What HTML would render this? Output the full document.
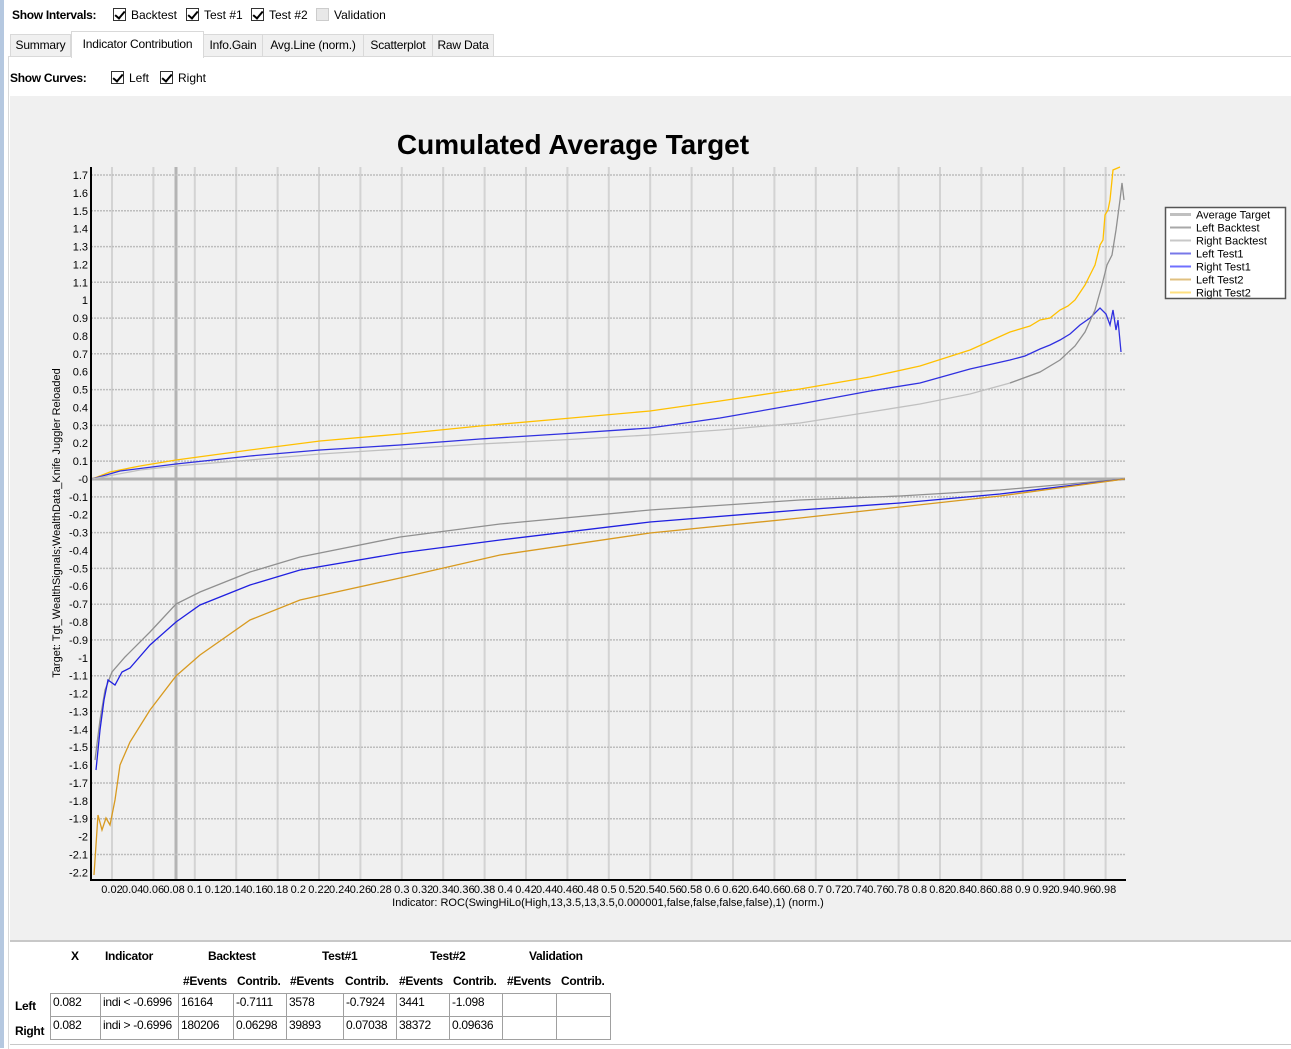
<!DOCTYPE html>
<html><head><meta charset="utf-8"><style>
body{margin:0;width:1291px;height:1048px;background:#fff;font-family:"Liberation Sans",sans-serif;font-size:12px;position:relative;overflow:hidden;color:#000}
.a{position:absolute}
.cb{position:absolute;width:13px;height:13px;border:1px solid #333;background:#fff;box-sizing:border-box}
.cb.on::after{content:"";position:absolute;left:3px;top:0px;width:4px;height:8px;border:solid #000;border-width:0 2px 2px 0;transform:rotate(40deg)}
.tab{position:absolute;top:34px;height:23px;background:#f0f0f0;border:1px solid #d9d9d9;box-sizing:border-box;line-height:21px;text-align:center;font-size:12px;letter-spacing:-0.2px}
table{border-collapse:collapse;position:absolute;left:50px;top:993px;font-size:12px;table-layout:fixed;letter-spacing:-0.3px}
td{border:1px solid #a0a0a0;height:23px;padding:0 2px;vertical-align:top;line-height:16px;white-space:nowrap;overflow:hidden;box-sizing:border-box}
.b{font-weight:bold;letter-spacing:-0.3px}
</style></head><body>
<div class="a" style="left:0;top:0;width:4px;height:1048px;background:#b5c8e0"></div>
<div class="a b" style="left:12px;top:8px">Show Intervals:</div>
<div class="cb on" style="left:113px;top:8px"></div><div class="a" style="left:131px;top:8px">Backtest</div>
<div class="cb on" style="left:186px;top:8px"></div><div class="a" style="left:204px;top:8px">Test #1</div>
<div class="cb on" style="left:251px;top:8px"></div><div class="a" style="left:269px;top:8px">Test #2</div>
<div class="cb" style="left:316px;top:8px;background:#e8e8e8;border-color:#ccc"></div><div class="a" style="left:334px;top:8px">Validation</div>

<div class="a" style="left:8px;top:56px;width:1283px;height:992px;border-left:1px solid #d9d9d9;border-top:1px solid #d9d9d9"></div>
<div class="tab" style="left:10px;width:61px">Summary</div>
<div class="tab" style="left:71px;top:31px;height:27px;width:133px;background:#fff;border-bottom:none;line-height:25px">Indicator Contribution</div>
<div class="tab" style="left:203px;width:60px">Info.Gain</div>
<div class="tab" style="left:262px;width:102px">Avg.Line (norm.)</div>
<div class="tab" style="left:363px;width:70px">Scatterplot</div>
<div class="tab" style="left:432px;width:62px">Raw Data</div>

<div class="a b" style="left:10px;top:71px">Show Curves:</div>
<div class="cb on" style="left:111px;top:71px"></div><div class="a" style="left:129px;top:71px">Left</div>
<div class="cb on" style="left:160px;top:71px"></div><div class="a" style="left:178px;top:71px">Right</div>

<div class="a" style="left:10px;top:96px;width:1281px;height:844px;background:#f0f0f0"></div>
<div class="a" style="left:10px;top:940px;width:1281px;height:2px;background:#c8c8c8"></div>
<div class="a" style="left:10px;top:1044px;width:1281px;height:1px;background:#c8c8c8"></div>

<svg class="a" style="left:0;top:0" width="1291" height="940" font-family="Liberation Sans, sans-serif">
<text x="573" y="154" font-size="28" font-weight="bold" text-anchor="middle">Cumulated Average Target</text>
<g stroke="#d3d3d3" stroke-width="2">
<line x1="112" y1="167" x2="112" y2="880"/><line x1="153.4" y1="167" x2="153.4" y2="880"/><line x1="194.8" y1="167" x2="194.8" y2="880"/><line x1="236.2" y1="167" x2="236.2" y2="880"/><line x1="277.6" y1="167" x2="277.6" y2="880"/><line x1="319" y1="167" x2="319" y2="880"/><line x1="360.4" y1="167" x2="360.4" y2="880"/><line x1="401.8" y1="167" x2="401.8" y2="880"/><line x1="443.2" y1="167" x2="443.2" y2="880"/><line x1="484.6" y1="167" x2="484.6" y2="880"/><line x1="526" y1="167" x2="526" y2="880"/><line x1="567.4" y1="167" x2="567.4" y2="880"/><line x1="608.8" y1="167" x2="608.8" y2="880"/><line x1="650.2" y1="167" x2="650.2" y2="880"/><line x1="691.6" y1="167" x2="691.6" y2="880"/><line x1="733" y1="167" x2="733" y2="880"/><line x1="774.4" y1="167" x2="774.4" y2="880"/><line x1="815.8" y1="167" x2="815.8" y2="880"/><line x1="857.2" y1="167" x2="857.2" y2="880"/><line x1="898.6" y1="167" x2="898.6" y2="880"/><line x1="940" y1="167" x2="940" y2="880"/><line x1="981.4" y1="167" x2="981.4" y2="880"/><line x1="1022.8" y1="167" x2="1022.8" y2="880"/><line x1="1064.2" y1="167" x2="1064.2" y2="880"/><line x1="1105.6" y1="167" x2="1105.6" y2="880"/>
</g>
<line x1="176" y1="167" x2="176" y2="880" stroke="#b4b4b4" stroke-width="3"/>
<g stroke="#bdbdbd" stroke-width="1.5" stroke-dasharray="2,1">
<line x1="91" y1="175" x2="1125" y2="175"/><line x1="91" y1="210.8" x2="1125" y2="210.8"/><line x1="91" y1="246.6" x2="1125" y2="246.6"/><line x1="91" y1="282.3" x2="1125" y2="282.3"/><line x1="91" y1="318.1" x2="1125" y2="318.1"/><line x1="91" y1="353.8" x2="1125" y2="353.8"/><line x1="91" y1="389.6" x2="1125" y2="389.6"/><line x1="91" y1="425.4" x2="1125" y2="425.4"/><line x1="91" y1="461.1" x2="1125" y2="461.1"/><line x1="91" y1="496.9" x2="1125" y2="496.9"/><line x1="91" y1="532.6" x2="1125" y2="532.6"/><line x1="91" y1="568.4" x2="1125" y2="568.4"/><line x1="91" y1="604.2" x2="1125" y2="604.2"/><line x1="91" y1="639.9" x2="1125" y2="639.9"/><line x1="91" y1="675.7" x2="1125" y2="675.7"/><line x1="91" y1="711.4" x2="1125" y2="711.4"/><line x1="91" y1="747.2" x2="1125" y2="747.2"/><line x1="91" y1="783" x2="1125" y2="783"/><line x1="91" y1="818.7" x2="1125" y2="818.7"/><line x1="91" y1="854.5" x2="1125" y2="854.5"/>
</g>
<line x1="91" y1="479" x2="1125" y2="479" stroke="#b0b0b0" stroke-width="3"/>
<g fill="none" stroke-width="1.3">
<polyline stroke="#ffc000" points="92,479 110,472 140,466 176,460 250,450 320,441 400,434 480,426 560,419 650,411 720,401 800,389 870,377 920,366 970,350 1010,332 1030,326 1040,320 1050,318 1060,310 1068,306 1075,300 1085,285 1090,275 1095,265 1100,245 1103,240 1105,215 1108,210 1110,200 1113,170 1120,167"/>
<polyline stroke="#3030e0" points="92,479 120,471 176,464 250,456 320,450 400,445 480,439 560,434 650,428 720,418 800,404 870,391 920,383 970,369 1010,360 1025,356 1040,349 1050,345 1060,340 1070,334 1080,325 1090,318 1095,313 1100,308 1106,314 1110,325 1113,310 1116,330 1118,320 1121,352"/>
<polyline stroke="#c0c0c0" points="92,479 140,470 176,466 250,460 320,454 400,449 480,444 560,440 650,435 720,430 800,423 870,412 920,404 970,394 1010,383 1040,372"/>
<polyline stroke="#909090" points="1010,383 1040,372 1060,360 1075,346 1085,332 1095,310 1102,285 1107,265 1112,255 1116,230 1120,200 1122,183 1124,200"/>
<polyline stroke="#909090" points="95,760 100,720 105,690 112,672 125,657 150,632 176,604 200,592 250,572 300,557 400,537 500,524 650,510 800,500 900,496 1000,490 1125,479"/>
<polyline stroke="#2020e0" points="96,770 100,730 104,700 108,680 115,685 122,672 130,668 150,645 176,622 200,605 250,585 300,570 400,553 500,540 650,522 800,510 900,503 1000,494 1125,479"/>
<polyline stroke="#d89a20" points="94,875 96,845 98,815 102,830 106,818 110,825 115,800 120,765 130,742 150,710 176,676 200,655 250,620 300,600 400,578 500,555 650,533 800,518 900,507 1000,496 1125,479"/>
</g>
<line x1="91" y1="167" x2="91" y2="881" stroke="#000" stroke-width="2"/>
<line x1="90" y1="880" x2="1126" y2="880" stroke="#000" stroke-width="2"/>
<g font-size="11" text-anchor="end" fill="#000">
<text x="88" y="179">1.7</text><text x="88" y="196.9">1.6</text><text x="88" y="214.8">1.5</text><text x="88" y="232.6">1.4</text><text x="88" y="250.5">1.3</text><text x="88" y="268.4">1.2</text><text x="88" y="286.3">1.1</text><text x="88" y="304.2">1</text><text x="88" y="322">0.9</text><text x="88" y="339.9">0.8</text><text x="88" y="357.8">0.7</text><text x="88" y="375.7">0.6</text><text x="88" y="393.6">0.5</text><text x="88" y="411.4">0.4</text><text x="88" y="429.3">0.3</text><text x="88" y="447.2">0.2</text><text x="88" y="465.1">0.1</text><text x="88" y="483">-0</text><text x="88" y="500.8">-0.1</text><text x="88" y="518.7">-0.2</text><text x="88" y="536.6">-0.3</text><text x="88" y="554.5">-0.4</text><text x="88" y="572.4">-0.5</text><text x="88" y="590.2">-0.6</text><text x="88" y="608.1">-0.7</text><text x="88" y="626">-0.8</text><text x="88" y="643.9">-0.9</text><text x="88" y="661.8">-1</text><text x="88" y="679.6">-1.1</text><text x="88" y="697.5">-1.2</text><text x="88" y="715.4">-1.3</text><text x="88" y="733.3">-1.4</text><text x="88" y="751.2">-1.5</text><text x="88" y="769">-1.6</text><text x="88" y="786.9">-1.7</text><text x="88" y="804.8">-1.8</text><text x="88" y="822.7">-1.9</text><text x="88" y="840.6">-2</text><text x="88" y="858.4">-2.1</text><text x="88" y="876.3">-2.2</text>
</g>
<g font-size="11" text-anchor="middle">
<text x="112" y="893">0.02</text><text x="132.7" y="893">0.04</text><text x="153.4" y="893">0.06</text><text x="174.1" y="893">0.08</text><text x="194.8" y="893">0.1</text><text x="215.5" y="893">0.12</text><text x="236.2" y="893">0.14</text><text x="256.9" y="893">0.16</text><text x="277.6" y="893">0.18</text><text x="298.3" y="893">0.2</text><text x="319" y="893">0.22</text><text x="339.7" y="893">0.24</text><text x="360.4" y="893">0.26</text><text x="381.1" y="893">0.28</text><text x="401.8" y="893">0.3</text><text x="422.5" y="893">0.32</text><text x="443.2" y="893">0.34</text><text x="463.9" y="893">0.36</text><text x="484.6" y="893">0.38</text><text x="505.3" y="893">0.4</text><text x="526" y="893">0.42</text><text x="546.7" y="893">0.44</text><text x="567.4" y="893">0.46</text><text x="588.1" y="893">0.48</text><text x="608.8" y="893">0.5</text><text x="629.5" y="893">0.52</text><text x="650.2" y="893">0.54</text><text x="670.9" y="893">0.56</text><text x="691.6" y="893">0.58</text><text x="712.3" y="893">0.6</text><text x="733" y="893">0.62</text><text x="753.7" y="893">0.64</text><text x="774.4" y="893">0.66</text><text x="795.1" y="893">0.68</text><text x="815.8" y="893">0.7</text><text x="836.5" y="893">0.72</text><text x="857.2" y="893">0.74</text><text x="877.9" y="893">0.76</text><text x="898.6" y="893">0.78</text><text x="919.3" y="893">0.8</text><text x="940" y="893">0.82</text><text x="960.7" y="893">0.84</text><text x="981.4" y="893">0.86</text><text x="1002.1" y="893">0.88</text><text x="1022.8" y="893">0.9</text><text x="1043.5" y="893">0.92</text><text x="1064.2" y="893">0.94</text><text x="1084.9" y="893">0.96</text><text x="1105.6" y="893">0.98</text>
<text x="608" y="906">Indicator: ROC(SwingHiLo(High,13,3.5,13,3.5,0.000001,false,false,false,false),1) (norm.)</text>
</g>
<text transform="translate(60,523) rotate(-90)" font-size="11" text-anchor="middle">Target: Tgt_WealthSignals;WealthData_Knife Juggler Reloaded</text>
<rect x="1165.5" y="207.5" width="120" height="91" fill="#fff" stroke="#555" stroke-width="1.5"/>
<g stroke-width="2">
<line x1="1170" y1="214.5" x2="1191" y2="214.5" stroke="#c0c0c0" stroke-width="3"/>
<line x1="1170" y1="227.5" x2="1191" y2="227.5" stroke="#a8a8a8"/>
<line x1="1170" y1="240.5" x2="1191" y2="240.5" stroke="#c8c8c8"/>
<line x1="1170" y1="253.5" x2="1191" y2="253.5" stroke="#7878e8"/>
<line x1="1170" y1="266.5" x2="1191" y2="266.5" stroke="#7070ff"/>
<line x1="1170" y1="279.5" x2="1191" y2="279.5" stroke="#e0c080"/>
<line x1="1170" y1="292.5" x2="1191" y2="292.5" stroke="#ffe080"/>
</g>
<g font-size="11">
<text x="1196" y="218.5">Average Target</text><text x="1196" y="231.5">Left Backtest</text><text x="1196" y="244.5">Right Backtest</text><text x="1196" y="257.5">Left Test1</text><text x="1196" y="270.5">Right Test1</text><text x="1196" y="283.5">Left Test2</text><text x="1196" y="296.5">Right Test2</text>
</g>
</svg>

<div class="a b" style="top:949px;left:71px">X</div>
<div class="a b" style="top:949px;left:105px">Indicator</div>
<div class="a b" style="top:949px;left:208px">Backtest</div>
<div class="a b" style="top:949px;left:322px">Test#1</div>
<div class="a b" style="top:949px;left:430px">Test#2</div>
<div class="a b" style="top:949px;left:529px">Validation</div>
<div class="a b" style="top:974px;left:183px">#Events</div>
<div class="a b" style="top:974px;left:237px">Contrib.</div>
<div class="a b" style="top:974px;left:290px">#Events</div>
<div class="a b" style="top:974px;left:345px">Contrib.</div>
<div class="a b" style="top:974px;left:399px">#Events</div>
<div class="a b" style="top:974px;left:453px">Contrib.</div>
<div class="a b" style="top:974px;left:507px">#Events</div>
<div class="a b" style="top:974px;left:561px">Contrib.</div>
<div class="a b" style="top:999px;left:15px">Left</div>
<div class="a b" style="top:1024px;left:15px">Right</div>
<table>
<colgroup><col style="width:50px"><col style="width:78px"><col style="width:55px"><col style="width:53px"><col style="width:57px"><col style="width:53px"><col style="width:53px"><col style="width:53px"><col style="width:54px"><col style="width:54px"></colgroup>
<tr><td>0.082</td><td>indi &lt; -0.6996</td><td>16164</td><td>-0.7111</td><td>3578</td><td>-0.7924</td><td>3441</td><td>-1.098</td><td></td><td></td></tr>
<tr><td>0.082</td><td>indi &gt; -0.6996</td><td>180206</td><td>0.06298</td><td>39893</td><td>0.07038</td><td>38372</td><td>0.09636</td><td></td><td></td></tr>
</table>
</body></html>
